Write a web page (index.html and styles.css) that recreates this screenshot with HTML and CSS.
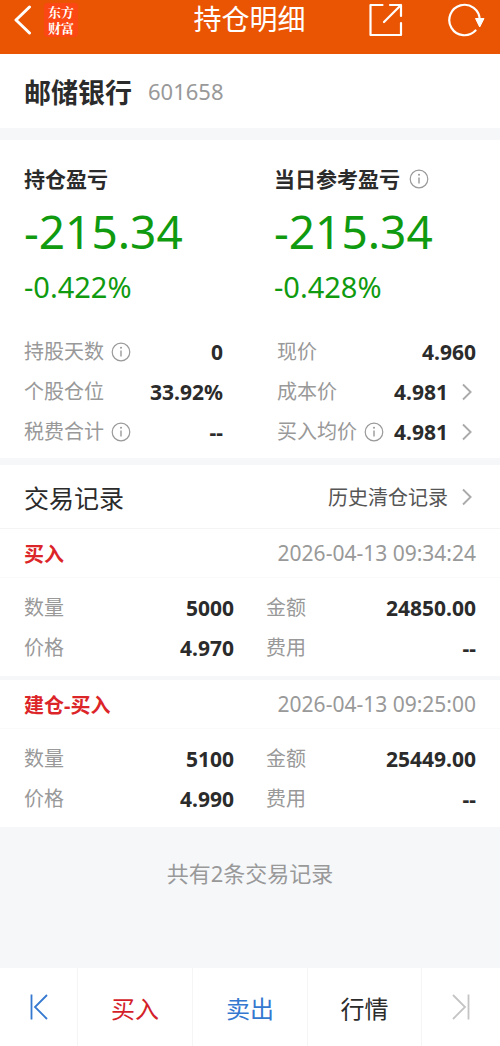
FILE: index.html
```html
<!DOCTYPE html>
<html lang="zh-CN">
<head>
<meta charset="utf-8">
<meta name="viewport" content="width=device-width, initial-scale=1">
<title>持仓明细</title>
<link rel="stylesheet" href="styles.css">
</head>
<body>
<svg class="defs" aria-hidden="true">
  <symbol id="info" viewBox="0 0 20 20"><circle cx="10" cy="10" r="8.8" fill="none" stroke="currentColor" stroke-width="1.2"/><path d="M10 8.4V14.4" stroke="currentColor" stroke-width="1.4"/><circle cx="10" cy="5.8" r="1" fill="currentColor"/></symbol>
  <symbol id="chev" viewBox="0 0 10 18"><path d="M1 1.500 8.600 9 1 16.500" fill="none" stroke="currentColor" stroke-width="1.900"/></symbol>
</svg>
<header class="topbar">
  <div class="topbar-left">
    <button class="icon-btn" aria-label="返回"><svg width="18" height="30" viewBox="0 0 18 30"><path d="M15.500 2 2 15 15.500 28" fill="none" stroke="currentColor" stroke-width="3" stroke-linecap="round" stroke-linejoin="round"/></svg></button>
    <div class="logo"><span>东方</span><span>财富</span></div>
  </div>
  <h1 class="title">持仓明细</h1>
  <div class="topbar-right">
    <button class="icon-btn" aria-label="分享"><svg width="34" height="34" viewBox="0 0 34 34" fill="none" stroke="currentColor" stroke-width="2.200" stroke-linecap="round" stroke-linejoin="round"><path d="M13.500 2H1.500V32H32V20"/><path d="M21 2H32V13M32 2 15 19"/></svg></button>
    <button class="icon-btn" aria-label="刷新"><svg width="38" height="34" viewBox="0 0 38 34"><path d="M28.500 27.500A15.200 15.200 0 1 1 32.700 17" fill="none" stroke="currentColor" stroke-width="2.200" stroke-linecap="round"/><path d="M28.500 15.500H37L32.700 24Z" fill="currentColor" stroke="currentColor" stroke-linejoin="round"/></svg></button>
  </div>
</header>
<main class="content">
  <section class="panel stock">
    <h2 class="stock-name">邮储银行</h2>
    <span class="stock-code">601658</span>
  </section>

  <section class="panel summary">
    <div class="profits">
      <div>
        <h3 class="profit-label">持仓盈亏</h3>
        <p class="profit-value">-215.34</p>
        <p class="profit-rate">-0.422%</p>
      </div>
      <div>
        <h3 class="profit-label">当日参考盈亏<button class="info" aria-label="当日参考盈亏说明"><svg><use href="#info"/></svg></button></h3>
        <p class="profit-value">-215.34</p>
        <p class="profit-rate">-0.428%</p>
      </div>
    </div>
    <dl class="details">
      <div class="row"><dt>持股天数<button class="info" aria-label="持股天数说明"><svg><use href="#info"/></svg></button></dt><dd>0</dd></div>
      <div class="row"><dt>现价</dt><dd>4.960</dd></div>
      <div class="row"><dt>个股仓位</dt><dd>33.92%</dd></div>
      <div class="row"><dt>成本价</dt><dd><a class="more" href="#cost">4.981<svg class="chev"><use href="#chev"/></svg></a></dd></div>
      <div class="row"><dt>税费合计<button class="info" aria-label="税费合计说明"><svg><use href="#info"/></svg></button></dt><dd>--</dd></div>
      <div class="row"><dt>买入均价<button class="info" aria-label="买入均价说明"><svg><use href="#info"/></svg></button></dt><dd><a class="more" href="#average">4.981<svg class="chev"><use href="#chev"/></svg></a></dd></div>
    </dl>
  </section>

  <section class="records">
    <div class="records-head">
      <h2 class="records-title">交易记录</h2>
      <a class="more history" href="#history">历史清仓记录<svg class="chev"><use href="#chev"/></svg></a>
    </div>
    <article class="trade">
      <div class="trade-head"><h3 class="trade-type">买入</h3><time>2026-04-13 09:34:24</time></div>
      <dl class="trade-body">
        <div class="row"><dt>数量</dt><dd>5000</dd></div>
        <div class="row"><dt>金额</dt><dd>24850.00</dd></div>
        <div class="row"><dt>价格</dt><dd>4.970</dd></div>
        <div class="row"><dt>费用</dt><dd>--</dd></div>
      </dl>
    </article>
    <article class="trade">
      <div class="trade-head"><h3 class="trade-type">建仓-买入</h3><time>2026-04-13 09:25:00</time></div>
      <dl class="trade-body">
        <div class="row"><dt>数量</dt><dd>5100</dd></div>
        <div class="row"><dt>金额</dt><dd>25449.00</dd></div>
        <div class="row"><dt>价格</dt><dd>4.990</dd></div>
        <div class="row"><dt>费用</dt><dd>--</dd></div>
      </dl>
    </article>
  </section>
  <p class="count">共有2条交易记录</p>
</main>
<nav class="bottombar">
  <button class="tab first" aria-label="上一个"><svg width="18" height="26" viewBox="0 0 18 26" fill="none" stroke="currentColor" stroke-width="1.800"><path d="M1.500 0.500V25.500M17 1 5 13 17 25"/></svg></button>
  <button class="tab buy">买入</button>
  <button class="tab sell">卖出</button>
  <button class="tab">行情</button>
  <button class="tab last" aria-label="下一个"><svg width="18" height="26" viewBox="0 0 18 26" fill="none" stroke="currentColor" stroke-width="1.800"><path d="M16.500 0.500V25.500M1 1 13 13 1 25"/></svg></button>
</nav>
</body>
</html>
```
FILE: styles.css
```css
* { box-sizing: border-box; margin: 0; padding: 0; }

body {
  display: flex;
  flex-direction: column;
  min-height: 100vh;
  background: #f6f7f9;
  color: #2b2b2b;
  font-family: "Noto Sans", "Noto Sans CJK SC", sans-serif;
  font-size: 20px;
}

button { border: 0; background: none; color: inherit; font: inherit; cursor: pointer; }
a { color: inherit; text-decoration: none; }
svg { display: block; }
.defs { position: absolute; width: 0; height: 0; }

.topbar {
  display: grid;
  grid-template-columns: 1fr auto 1fr;
  align-items: center;
  padding: 0 15px 15px 14px;
  background: #ea5504;
  color: #fff;
}
.topbar-left, .topbar-right { display: flex; align-items: center; }
.topbar-left { gap: 12px; }
.topbar-right { justify-content: flex-end; gap: 44px; }
.title { font-size: 28px; font-weight: 400; line-height: 39px; }
.logo {
  display: grid;
  padding: 1px 4px;
  border-radius: 4px;
  background: #fb4713;
  font-family: "Noto Serif CJK SC", "Noto Sans CJK SC", serif;
  font-size: 13px;
  font-weight: 700;
  line-height: 16px;
}

.content { flex: 1; }
.panel { background: #fff; padding: 0 24px; }

.stock { display: flex; align-items: center; gap: 16px; height: 74px; margin-bottom: 12px; }
.stock-name { font-size: 27px; font-weight: 700; }
.stock-code { color: #999; font-size: 22px; }

.summary { padding-top: 24px; padding-bottom: 6px; margin-bottom: 7px; }
.profits { display: grid; grid-template-columns: 1fr 1fr; gap: 48px; margin-bottom: 26px; }
.profit-label { display: flex; align-items: center; font-size: 21px; font-weight: 700; line-height: 30px; }
.profit-value { color: #0f9a0f; font-size: 46px; line-height: 74px; }
.profit-rate { color: #0f9a0f; font-size: 29px; line-height: 38px; }

.info { margin-left: 7px; color: #999; }
.profit-label .info { margin-left: 9px; }
.info svg { width: 20px; height: 20px; }

.details { display: grid; grid-template-columns: 1fr 1fr; column-gap: 54px; }
.row { display: flex; justify-content: space-between; align-items: center; line-height: 40px; white-space: nowrap; }
.row dt { display: flex; align-items: center; color: #999; }
.row dd { font-size: 21px; font-weight: 700; }
.more { display: flex; align-items: center; gap: 14px; }
.chev { width: 10px; height: 18px; margin-right: 4px; color: #aaa; }

.records-head {
  display: flex;
  justify-content: space-between;
  align-items: center;
  height: 63px;
  padding: 0 24px;
  background: #fff;
}
.records-title { font-size: 25px; font-weight: 400; }
.history { color: #555; }

.trade { background: #fff; border-top: 1px solid #f4f4f4; }
.trade + .trade { border-top: 4px solid #f6f7f8; }
.trade-head {
  display: flex;
  justify-content: space-between;
  align-items: center;
  height: 49px;
  padding: 0 24px;
  border-bottom: 1px solid #fafafa;
}
.trade-type { color: #dc2528; font-size: 20px; font-weight: 700; }
.trade-head time { color: #999; font-size: 21px; }
.trade-body { display: grid; grid-template-columns: 1fr 1fr; column-gap: 32px; padding: 10px 24px 8px; }

.count { padding: 30px 24px; color: #999; font-size: 22px; line-height: 32px; text-align: center; }

.bottombar { display: grid; grid-template-columns: 78fr 115fr 115fr 114fr 78fr; height: 78px; background: #fff; }
.tab { display: flex; align-items: center; justify-content: center; border-right: 1px solid #f5f5f5; font-size: 24px; }
.tab:last-child { border-right: 0; }
.first, .sell { color: #3478d0; }
.buy { color: #d41f2b; }
.last { color: #c4c4c4; }
```
